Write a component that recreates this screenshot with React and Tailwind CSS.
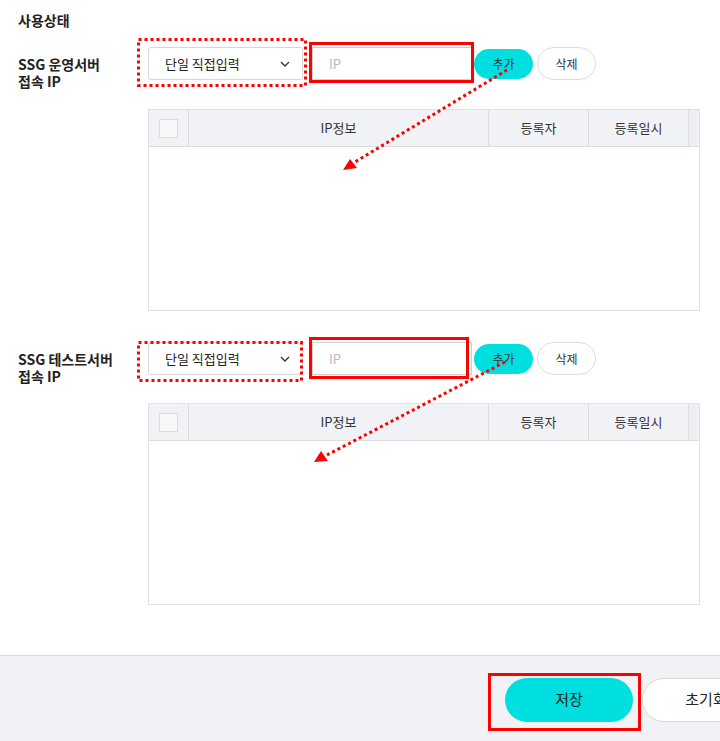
const font = { fontFamily: '"Noto Sans CJK KR", "Noto Sans", sans-serif' };

function Chevron() {
  return (
    <svg width="10" height="6" viewBox="0 0 10 6" fill="none">
      <path d="M1 1L5 5L9 1" stroke="#333" strokeWidth="1.3" />
    </svg>
  );
}

function Controls() {
  return (
    <div className="flex items-center h-[33px]">
      <div className="w-[155px] h-[33px] border border-[#d8d8d8] rounded-[3px] bg-white flex items-center justify-between pl-[16px] pr-[12px]">
        <span className="text-[13px] text-[#222] leading-none">단일 직접입력</span>
        <Chevron />
      </div>
      <div className="ml-[9px] w-[160px] h-[33px] border border-[#cfd0d4] bg-white flex items-center pl-[16px]">
        <span className="text-[13px] text-[#bbb] leading-none">IP</span>
      </div>
      <button className="ml-[2px] w-[59px] h-[30px] rounded-full bg-[#00dfdf] text-[12px] text-[#333]">추가</button>
      <button className="ml-[4px] w-[59px] h-[33px] rounded-full bg-white border border-[#dcdcdc] text-[12px] text-[#333]">삭제</button>
    </div>
  );
}

function IpTable() {
  return (
    <div className="w-[552px] h-[202px] border border-[#e2e2e4] bg-white flex flex-col">
      <div className="flex h-[37px] bg-[#f1f2f6] border-b border-[#dcdde1] text-[13px] text-[#333]">
        <div className="w-[40px] flex items-center justify-center border-r border-[#dcdde1]">
          <div className="w-[19px] h-[19px] bg-[#f8f8f8] border border-[#dcdcdc]" />
        </div>
        <div className="w-[300px] flex items-center justify-center border-r border-[#dcdde1]">IP정보</div>
        <div className="w-[100px] flex items-center justify-center border-r border-[#dcdde1]">등록자</div>
        <div className="w-[100px] flex items-center justify-center border-r border-[#dcdde1]">등록일시</div>
        <div className="flex-1 bg-[#eeeff2]" />
      </div>
      <div className="flex-1" />
    </div>
  );
}

function Section({ title, mt }) {
  return (
    <div className={`flex items-start h-[33px] ${mt}`}>
      <div className="w-[130px] shrink-0 pt-[9px] text-[14px] font-bold leading-[17px] text-[#222]">
        {title}
        <br />
        접속 IP
      </div>
      <Controls />
    </div>
  );
}

// red annotation marks drawn over the form
function Overlay() {
  return (
    <svg className="absolute inset-0 pointer-events-none" width="720" height="741">
      <rect x="138.5" y="39.5" width="167" height="46" fill="none" stroke="#f00" strokeWidth="3" strokeDasharray="3 3" />
      <rect x="310.5" y="43.5" width="162" height="38" fill="none" stroke="#f00" strokeWidth="3" />
      <line x1="507" y1="70" x2="355" y2="162" stroke="#f00" strokeWidth="3" strokeDasharray="3 3" />
      <polygon points="343,170 350,159 357,168" fill="#f00" />
      <rect x="138.5" y="342.5" width="163" height="38" fill="none" stroke="#f00" strokeWidth="3" strokeDasharray="3 3" />
      <rect x="310.5" y="338.5" width="157" height="39" fill="none" stroke="#f00" strokeWidth="3" />
      <line x1="505" y1="362" x2="327" y2="455" stroke="#f00" strokeWidth="3" strokeDasharray="3 3" />
      <polygon points="314,462 321,451 328,461" fill="#f00" />
      <rect x="489.5" y="674.5" width="150" height="55" fill="none" stroke="#f00" strokeWidth="3" />
    </svg>
  );
}

export default function App() {
  return (
    <div className="relative w-[720px] h-[741px] overflow-hidden bg-white flex flex-col" style={font}>
      <div className="flex-1 pl-[18px]">
        <div className="pt-[10px] text-[14px] font-bold leading-[20px] text-[#222]">사용상태</div>
        <Section title="SSG 운영서버" mt="mt-[17px]" />
        <div className="mt-[29px] ml-[130px]">
          <IpTable />
        </div>
        <Section title="SSG 테스트서버" mt="mt-[31px]" />
        <div className="mt-[28px] ml-[130px]">
          <IpTable />
        </div>
      </div>
      <div className="h-[86px] shrink-0 bg-[#f1f2f6] border-t border-[#d9d9d9] flex items-center pl-[505px] gap-[9px] pt-[2px]">
        <button className="shrink-0 w-[128px] h-[44px] rounded-full bg-[#00dfdf] text-[15px] text-[#222]">저장</button>
        <button className="shrink-0 w-[128px] h-[44px] rounded-full bg-white border border-[#d8d8d8] text-[15px] text-[#222]">초기화</button>
      </div>
      <Overlay />
    </div>
  );
}
